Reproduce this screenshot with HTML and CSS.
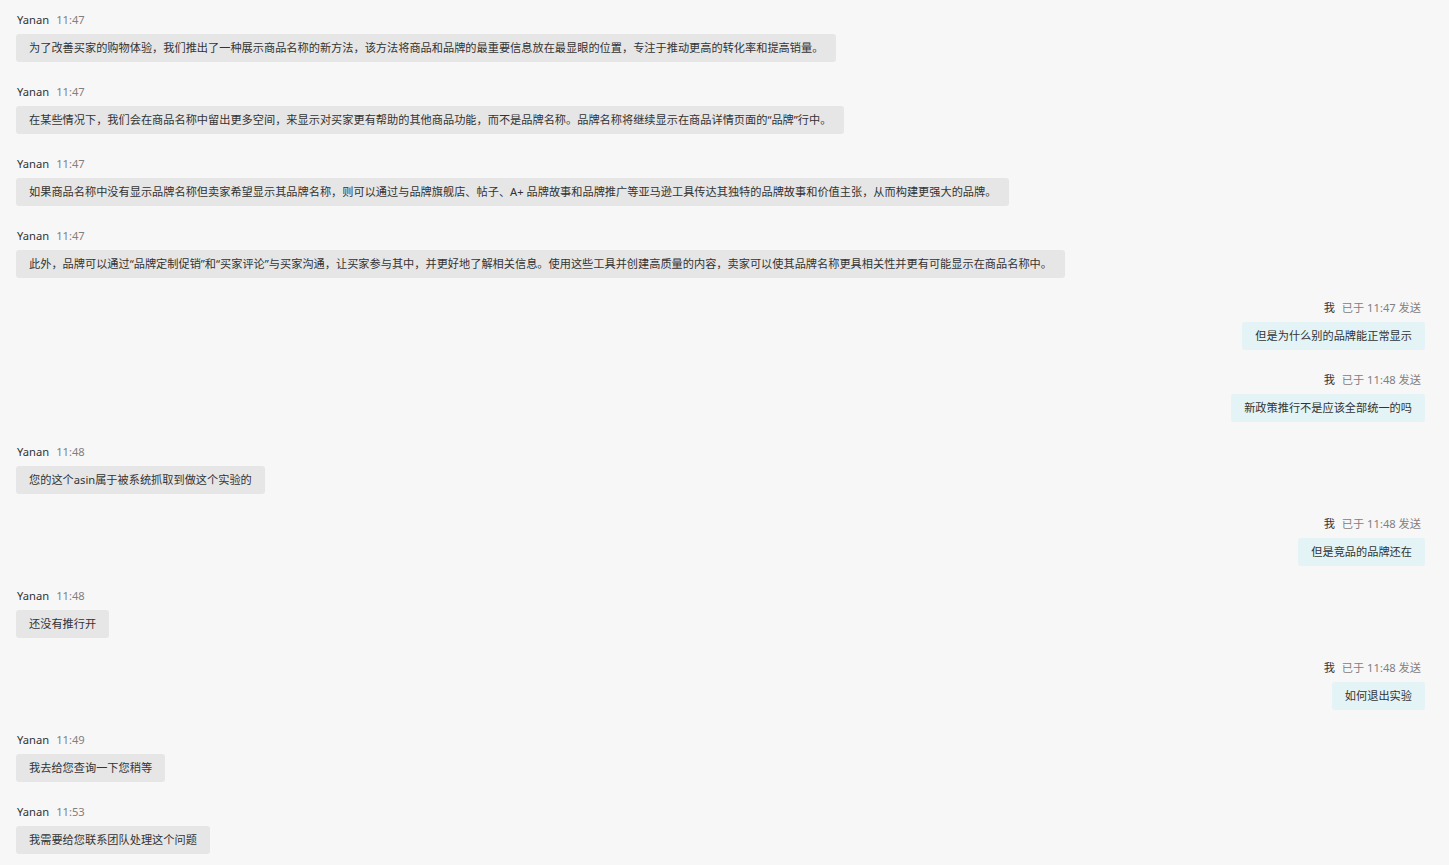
FILE: index.html
```html
<!DOCTYPE html>
<html lang="zh-CN">
<head>
  <meta charset="UTF-8">
  <meta name="viewport" content="width=device-width, initial-scale=1.0">
  <title>消息记录</title>
  <link rel="stylesheet" href="styles.css">
</head>
<body>
  <div class="chat">
    <div class="msg left">
      <div class="meta"><span class="name">Yanan</span><span class="time">11:47</span></div>
      <div class="bubble">为了改善买家的购物体验，我们推出了一种展示商品名称的新方法，该方法将商品和品牌的最重要信息放在最显眼的位置，专注于推动更高的转化率和提高销量。</div>
    </div>
    <div class="msg left">
      <div class="meta"><span class="name">Yanan</span><span class="time">11:47</span></div>
      <div class="bubble">在某些情况下，我们会在商品名称中留出更多空间，来显示对买家更有帮助的其他商品功能，而不是品牌名称。品牌名称将继续显示在商品详情页面的“品牌”行中。</div>
    </div>
    <div class="msg left">
      <div class="meta"><span class="name">Yanan</span><span class="time">11:47</span></div>
      <div class="bubble">如果商品名称中没有显示品牌名称但卖家希望显示其品牌名称，则可以通过与品牌旗舰店、帖子、A+ 品牌故事和品牌推广等亚马逊工具传达其独特的品牌故事和价值主张，从而构建更强大的品牌。</div>
    </div>
    <div class="msg left">
      <div class="meta"><span class="name">Yanan</span><span class="time">11:47</span></div>
      <div class="bubble">此外，品牌可以通过“品牌定制促销”和“买家评论”与买家沟通，让买家参与其中，并更好地了解相关信息。使用这些工具并创建高质量的内容，卖家可以使其品牌名称更具相关性并更有可能显示在商品名称中。</div>
    </div>
    <div class="msg right">
      <div class="meta"><span class="name">我</span><span class="time">已于 11:47 发送</span></div>
      <div class="bubble">但是为什么别的品牌能正常显示</div>
    </div>
    <div class="msg right">
      <div class="meta"><span class="name">我</span><span class="time">已于 11:48 发送</span></div>
      <div class="bubble">新政策推行不是应该全部统一的吗</div>
    </div>
    <div class="msg left">
      <div class="meta"><span class="name">Yanan</span><span class="time">11:48</span></div>
      <div class="bubble">您的这个asin属于被系统抓取到做这个实验的</div>
    </div>
    <div class="msg right">
      <div class="meta"><span class="name">我</span><span class="time">已于 11:48 发送</span></div>
      <div class="bubble">但是竞品的品牌还在</div>
    </div>
    <div class="msg left">
      <div class="meta"><span class="name">Yanan</span><span class="time">11:48</span></div>
      <div class="bubble">还没有推行开</div>
    </div>
    <div class="msg right">
      <div class="meta"><span class="name">我</span><span class="time">已于 11:48 发送</span></div>
      <div class="bubble">如何退出实验</div>
    </div>
    <div class="msg left">
      <div class="meta"><span class="name">Yanan</span><span class="time">11:49</span></div>
      <div class="bubble">我去给您查询一下您稍等</div>
    </div>
    <div class="msg left">
      <div class="meta"><span class="name">Yanan</span><span class="time">11:53</span></div>
      <div class="bubble">我需要给您联系团队处理这个问题</div>
    </div>
  </div>
</body>
</html>
```

FILE: styles.css
```css
body {
  margin: 0;
  background-color: #f7f7f8;
  font-family: "Noto Sans", "Noto Sans CJK SC", sans-serif;
  color: #333;
}
.chat {
  display: flex;
  flex-direction: column;
  padding: 12px 24px 0 16px;
}
.msg {
  display: flex;
  flex-direction: column;
  margin-bottom: 22px;
}
.msg.left {
  align-items: flex-start;
}
.msg.right {
  align-items: flex-end;
}
.meta {
  font-size: 11.2px;
  line-height: 16px;
  margin-bottom: 6px;
}
.msg.left .meta {
  padding-left: 1px;
}
.msg.right .meta {
  padding-right: 4px;
}
.name {
  color: #333;
  margin-right: 7px;
}
.time {
  color: #808080;
}
.bubble {
  font-size: 11.2px;
  line-height: 16px;
  padding: 6px 13px 6px 13px;
  border-radius: 3px;
}
.msg.left .bubble {
  background-color: #e6e6e6;
}
.msg.right .bubble {
  background-color: #e4f3f5;
}
```
